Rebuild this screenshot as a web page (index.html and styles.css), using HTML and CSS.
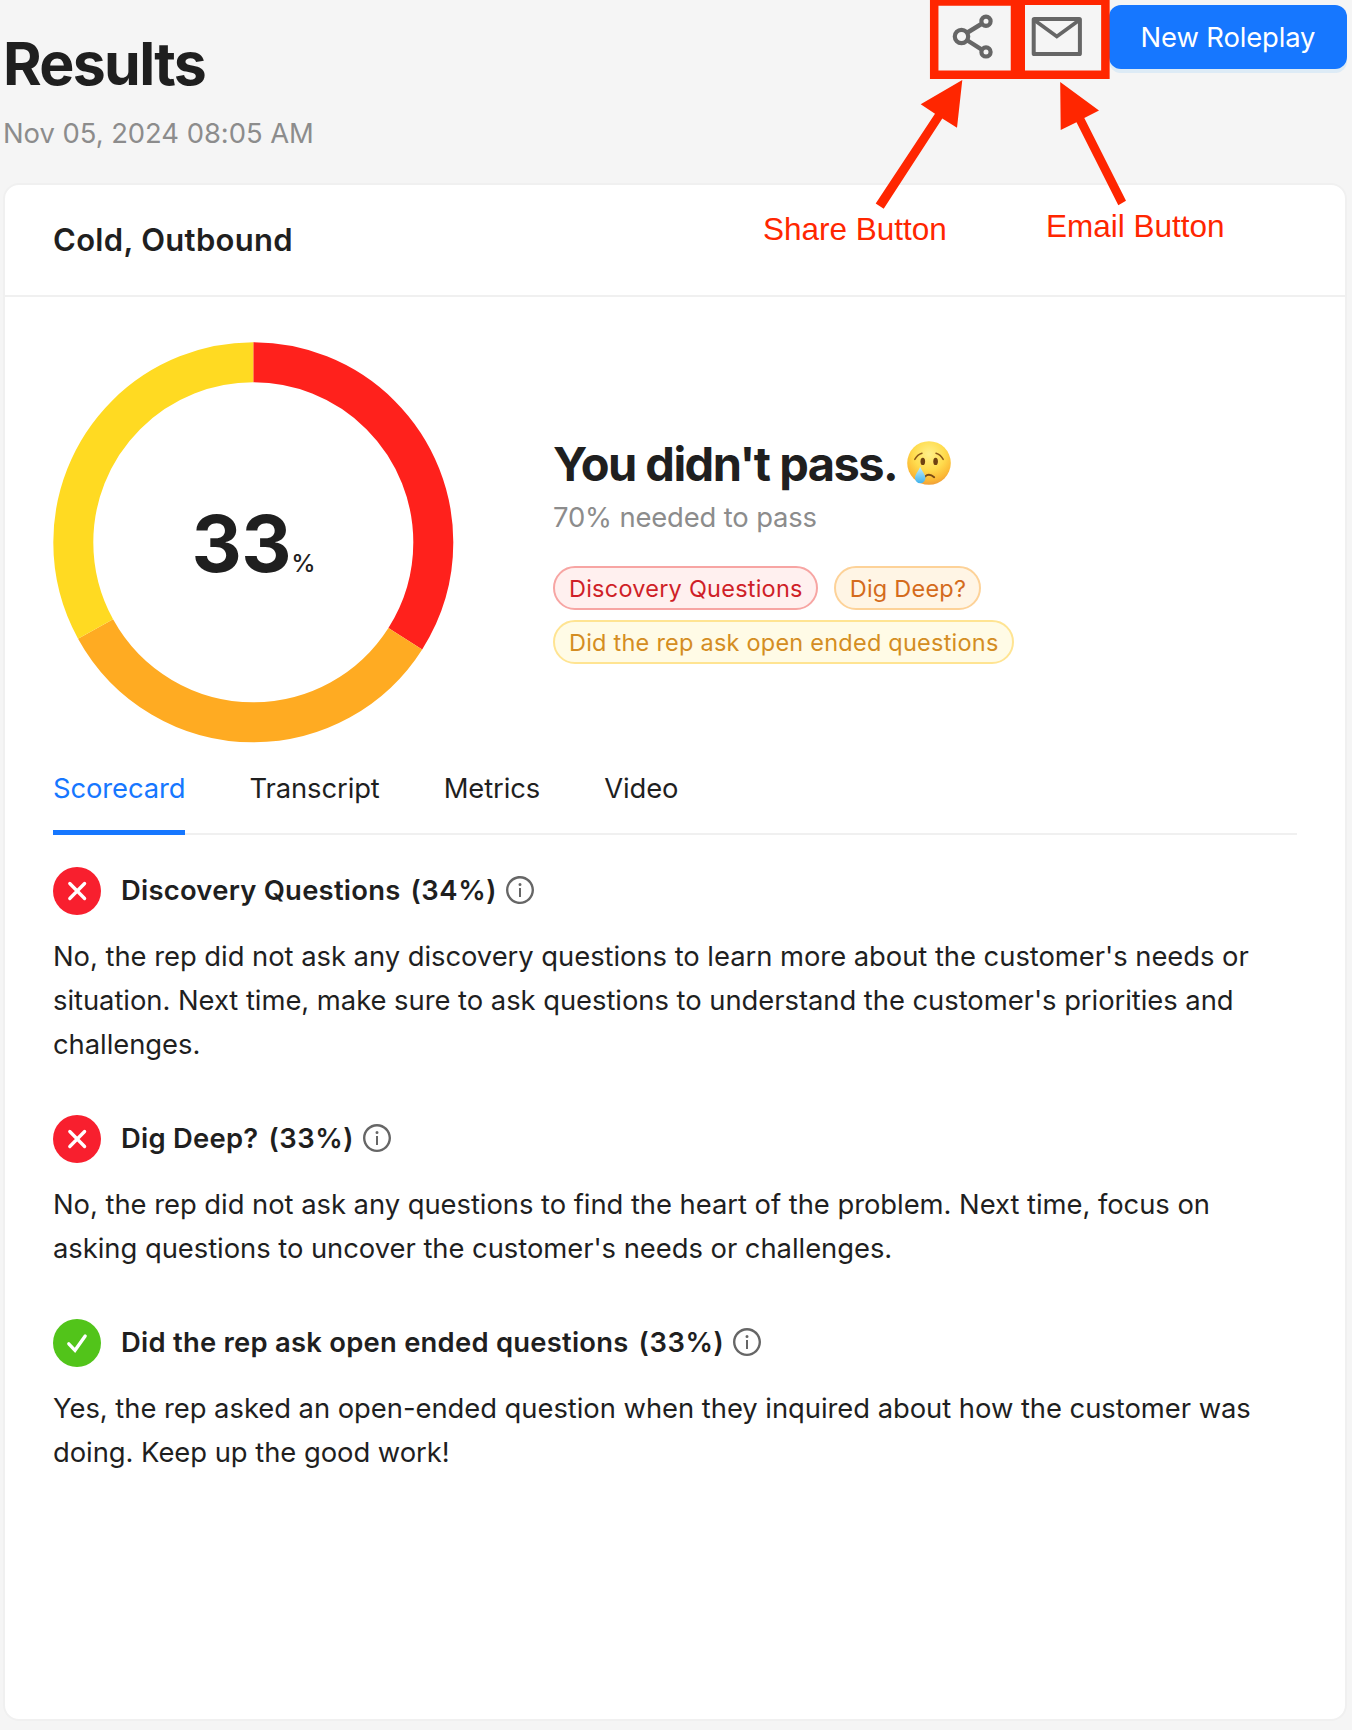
FILE: index.html
```html
<!DOCTYPE html>
<html lang="en">
<head>
<meta charset="utf-8">
<title>Results</title>
<link rel="stylesheet" href="styles.css">
</head>
<body>
<svg class="defs" aria-hidden="true">
  <symbol id="info" viewBox="0 0 1024 1024">
    <path d="M512 64C264.6 64 64 264.6 64 512s200.6 448 448 448 448-200.6 448-448S759.4 64 512 64zm0 820c-205.4 0-372-166.6-372-372s166.6-372 372-372 372 166.6 372 372-166.6 372-372 372z"/>
    <path d="M464 336a48 48 0 1096 0 48 48 0 10-96 0zm72 112h-48c-4.4 0-8 3.6-8 8v272c0 4.4 3.6 8 8 8h48c4.4 0 8-3.6 8-8V456c0-4.4-3.6-8-8-8z"/>
  </symbol>
  <symbol id="cross" viewBox="0 0 48 48">
    <path d="M16.800 16.500 31.600 31.500M31.600 16.500 16.800 31.500" fill="none" stroke="#fff" stroke-width="3.300" stroke-linecap="round"/>
  </symbol>
  <symbol id="check" viewBox="0 0 48 48">
    <path d="M15.800 24.800 22 31.300 32.200 17" fill="none" stroke="#fff" stroke-width="3.300" stroke-linecap="round"/>
  </symbol>
</svg>

<main class="page">
  <header class="top">
    <div class="heading">
      <h1>Results</h1>
      <p class="date">Nov 05, 2024 08:05 AM</p>
    </div>
    <div class="actions">
      <button class="icon-btn" aria-label="Share">
        <svg width="64" height="64" viewBox="0 0 64 64" fill="none" stroke="#666" stroke-width="4.200">
          <circle cx="20.500" cy="31.500" r="6.700"/>
          <circle cx="45" cy="16.200" r="4.600"/>
          <circle cx="45" cy="46.900" r="4.600"/>
          <path d="M26.500 27.500 41.200 18.500M26.500 35.500 41.200 44.800" stroke-width="4.400"/>
        </svg>
      </button>
      <button class="icon-btn" aria-label="Email">
        <svg width="64" height="64" viewBox="0 0 64 64" fill="none" stroke="#666">
          <rect x="8.700" y="14" width="46.200" height="35" rx=".6" stroke-width="4"/>
          <path d="M9.200 15 31.800 31.500 54.400 15" stroke-width="3.800"/>
        </svg>
      </button>
      <button class="primary">New Roleplay</button>
    </div>
  </header>

  <section class="card">
    <div class="card-head">Cold, Outbound</div>
    <div class="card-body">
      <div class="overview">
        <div class="donut">
          <svg width="401" height="401" viewBox="0 0 401 401" fill="none" stroke-width="40">
            <g transform="rotate(-90 200.3 200.3)">
              <circle cx="200.3" cy="200.3" r="180" stroke="#ff211c" pathLength="100" stroke-dasharray="34 66"/>
              <circle cx="200.3" cy="200.3" r="180" stroke="#ffab22" pathLength="100" stroke-dasharray="33 67" stroke-dashoffset="-34"/>
              <circle cx="200.3" cy="200.3" r="180" stroke="#ffda22" pathLength="100" stroke-dasharray="33 67" stroke-dashoffset="-67"/>
            </g>
          </svg>
          <div class="score"><span>33</span><small>%</small></div>
        </div>
        <div class="summary">
          <h2>You didn't pass.
            <svg class="emoji" viewBox="0 0 44 44" role="img" aria-label="crying face">
              <defs>
                <radialGradient id="skin" cx=".5" cy=".3" r=".72">
                  <stop offset="0" stop-color="#fff08a"/>
                  <stop offset=".5" stop-color="#ffdc4e"/>
                  <stop offset=".82" stop-color="#fbb935"/>
                  <stop offset="1" stop-color="#ee9a3a"/>
                </radialGradient>
                <linearGradient id="tear" x1="0" y1="0" x2="0" y2="1">
                  <stop offset="0" stop-color="#c9f0fb"/>
                  <stop offset="1" stop-color="#3fb2ec"/>
                </linearGradient>
              </defs>
              <circle cx="22" cy="22" r="21.8" fill="url(#skin)"/>
              <ellipse cx="15.8" cy="20.4" rx="2.3" ry="3.7" fill="#6f4212"/>
              <ellipse cx="28.6" cy="20.4" rx="2.3" ry="3.7" fill="#6f4212"/>
              <path d="M7.800 18.400Q10.400 13.400 15 12.200M29 12.200Q33.600 13.400 36.200 18.400" fill="none" stroke="#8a5718" stroke-width="1.500" stroke-linecap="round"/>
              <path d="M18 35.600Q22 31.800 27.200 36.200" fill="none" stroke="#7a4a14" stroke-width="1.900" stroke-linecap="round"/>
              <path d="M13.200 25.600C11.600 30.400 8 33.200 8 37A5.200 5.200 0 0 0 18.400 37C18.400 33.200 14.800 30.400 13.200 25.600Z" fill="url(#tear)"/>
            </svg>
          </h2>
          <p class="needed">70% needed to pass</p>
          <div class="tags">
            <span class="tag red">Discovery Questions</span>
            <span class="tag orange">Dig Deep?</span>
            <span class="tag gold">Did the rep ask open ended questions</span>
          </div>
        </div>
      </div>

      <nav class="tabs">
        <a class="tab active">Scorecard</a>
        <a class="tab">Transcript</a>
        <a class="tab">Metrics</a>
        <a class="tab">Video</a>
      </nav>

      <div class="items">
        <article>
          <div class="item-head">
            <svg class="status fail"><use href="#cross"/></svg>
            <h3>Discovery Questions</h3><span class="pct">(34%)</span>
            <svg class="info"><use href="#info"/></svg>
          </div>
          <p>No, the rep did not ask any discovery questions to learn more about the customer's needs or situation. Next time, make sure to ask questions to understand the customer's priorities and challenges.</p>
        </article>
        <article>
          <div class="item-head">
            <svg class="status fail"><use href="#cross"/></svg>
            <h3>Dig Deep?</h3><span class="pct">(33%)</span>
            <svg class="info"><use href="#info"/></svg>
          </div>
          <p>No, the rep did not ask any questions to find the heart of the problem. Next time, focus on asking questions to uncover the customer's needs or challenges.</p>
        </article>
        <article>
          <div class="item-head">
            <svg class="status ok"><use href="#check"/></svg>
            <h3>Did the rep ask open ended questions</h3><span class="pct">(33%)</span>
            <svg class="info"><use href="#info"/></svg>
          </div>
          <p>Yes, the rep asked an open-ended question when they inquired about how the customer was doing. Keep up the good work!</p>
        </article>
      </div>
    </div>
  </section>

  <div class="callouts">
    <svg width="1352" height="260" viewBox="0 0 1352 260">
      <g fill="none" stroke="#ff2600">
        <path d="M934.200 1.500H1015V74.700H934.200Z" stroke-width="8.500"/>
        <path d="M1020.700 .7H1105.400V74.700H1020.700Z" stroke-width="8.500"/>
        <path d="M1018 0V79" stroke-width="14"/>
      </g>
      <g fill="#ff2600">
        <path d="M962.300 80 920.700 104.300 935 113.700 875.700 203.500 883.700 208.700 942.300 118.500 957 127.700Z"/>
        <path d="M1060.200 82 1099 110.500 1084.300 118 1126 200.700 1118.300 205.300 1076.500 122.300 1060.700 130Z"/>
      </g>
    </svg>
    <span class="label share-label">Share Button</span>
    <span class="label email-label">Email Button</span>
  </div>
</main>
</body>
</html>
```
FILE: styles.css
```css
* { box-sizing: border-box; margin: 0; }

body {
  background: #f5f5f5;
  color: #1f1f1f;
  font: 400 27.4px/44px Inter, sans-serif;
  letter-spacing: -0.04px;
}

.defs { position: absolute; width: 0; height: 0; }

.page {
  position: relative;
  height: 1730px;
  padding: 0 5px 0 3px;
  overflow: hidden;
}

.top {
  display: flex;
  justify-content: space-between;
  align-items: flex-start;
  height: 183px;
}

.heading { padding-top: 28px; }

h1 {
  font-size: 59px;
  line-height: 72px;
  font-weight: 700;
  letter-spacing: -1.7px;
}

.date { margin-top: 11px; color: #8c8c8c; letter-spacing: -.03px; }

.actions { display: flex; padding-top: 5px; }

button { border: 0; padding: 0; background: none; font: inherit; }

.icon-btn { width: 64px; height: 64px; margin-right: 20px; }
.icon-btn svg { display: block; }

.primary {
  width: 238px;
  height: 64px;
  border-radius: 12px;
  background: #1677ff;
  box-shadow: 0 4px 0 rgba(5, 145, 255, .1);
  color: #fff;
  letter-spacing: -0.12px;
}

.card {
  width: 1344px;
  height: 1538px;
  background: #fff;
  border: 2px solid #f0f0f0;
  border-radius: 16px;
}

.card-head {
  height: 112px;
  padding: 0 48px;
  border-bottom: 2px solid #f0f0f0;
  font-size: 31px;
  line-height: 110px;
  font-weight: 600;
  letter-spacing: .32px;
}

.card-body { padding: 45px 48px 0; }

.overview { display: flex; gap: 100px; }

.donut { display: grid; width: 400px; height: 400px; }
.donut > * { grid-area: 1 / 1; }

.score {
  display: flex;
  justify-content: center;
  align-items: baseline;
  line-height: 404px;
}
.score span { font-size: 78px; font-weight: 700; letter-spacing: -.5px; }
.score small { font-size: 24.5px; font-weight: 500; line-height: 24px; }

.summary { padding-top: 93px; }

h2 {
  display: flex;
  align-items: center;
  font-size: 47px;
  line-height: 58px;
  font-weight: 700;
  letter-spacing: -1.53px;
}
.emoji { width: 44px; height: 44px; margin: -2px 0 0 10px; }

.needed { margin-top: 2px; color: #8c8c8c; letter-spacing: -.14px; }

.tags {
  display: flex;
  flex-wrap: wrap;
  gap: 10px 16px;
  width: 480px;
  margin-top: 27px;
}
.tag {
  padding: 1px 13px 0 14px;
  height: 44px;
  border: 2px solid;
  border-radius: 22px;
  font-size: 23.5px;
  line-height: 40px;
  letter-spacing: .23px;
}
.red { color: #cf1f28; background: #fff0ef; border-color: #f7a5a3; }
.orange { color: #d46b1c; background: #fff5e5; border-color: #fdd298; }
.gold { color: #d48d22; background: #fffbe6; border-color: #ffe492; }

.tabs {
  display: flex;
  gap: 64px;
  height: 69px;
  margin-top: 24px;
  border-bottom: 2px solid #f0f0f0;
}
.tab { position: relative; letter-spacing: -.1px; }
.active { color: #1677ff; }
.active::after {
  content: "";
  position: absolute;
  left: 0;
  right: 1px;
  bottom: -2px;
  height: 5px;
  background: #1677ff;
}

.items {
  display: flex;
  flex-direction: column;
  gap: 48px;
  padding-top: 31px;
}
.item-head {
  display: flex;
  align-items: center;
  height: 48px;
  margin-bottom: 20px;
  font-weight: 600;
}
.status { width: 48px; height: 48px; margin: 1px 20px 0 0; border-radius: 50%; }
.fail { background: #f81f2e; }
.ok { background: #52c41a; }
h3 { font-size: inherit; font-weight: 600; letter-spacing: .25px; }
.pct { margin-left: 10px; letter-spacing: .6px; }
.info { width: 32px; height: 32px; margin-left: 7px; fill: #666; }

.callouts { position: absolute; left: 0; top: 0; pointer-events: none; }
.callouts svg { display: block; }
.label {
  position: absolute;
  font: 31.5px/36px "Liberation Sans", Arial, sans-serif;
  letter-spacing: 0;
  color: #ff2600;
  white-space: nowrap;
}
.share-label { left: 763px; top: 211px; }
.email-label { left: 1046px; top: 208px; }
```
